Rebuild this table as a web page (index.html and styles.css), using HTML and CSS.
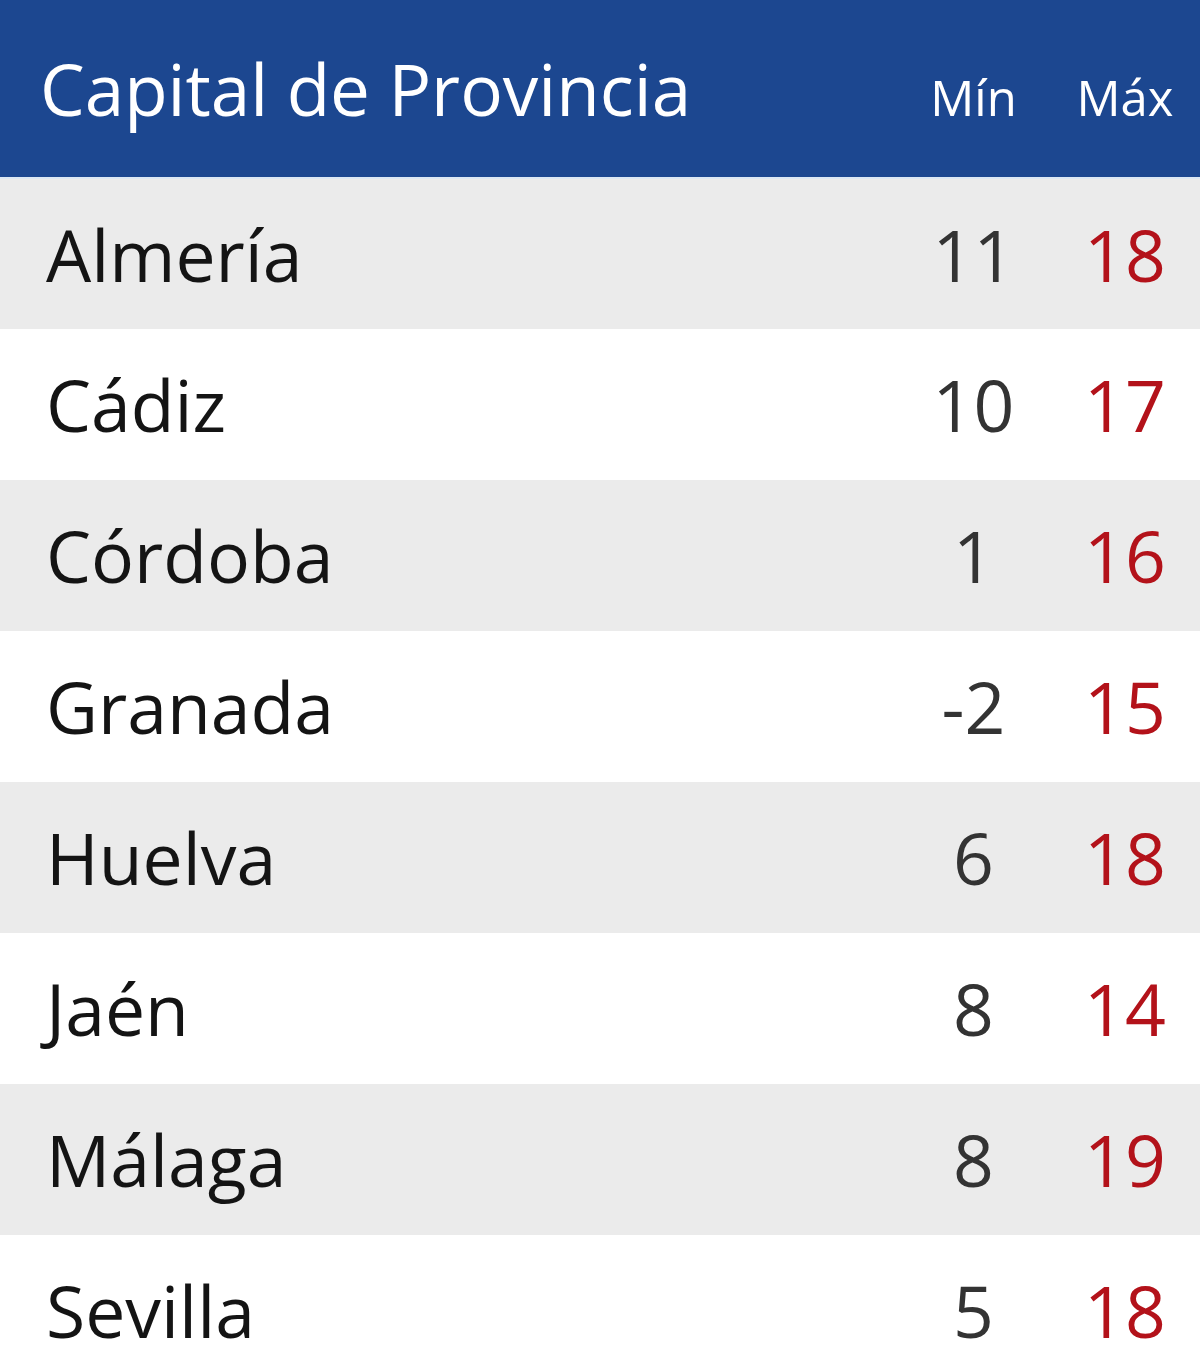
FILE: index.html
```html
<!DOCTYPE html>
<html lang="es">
<head>
<meta charset="utf-8">
<title>Temperaturas</title>
<link rel="stylesheet" href="styles.css">
</head>
<body>
<table class="temps">
  <thead>
    <tr class="head">
      <th class="name">Capital de Provincia</th>
      <th class="min">Mín</th>
      <th class="max">Máx</th>
    </tr>
  </thead>
  <tbody>
    <tr class="odd"><td class="name">Almería</td><td class="min">11</td><td class="max">18</td></tr>
    <tr><td class="name">Cádiz</td><td class="min">10</td><td class="max">17</td></tr>
    <tr class="odd"><td class="name">Córdoba</td><td class="min">1</td><td class="max">16</td></tr>
    <tr><td class="name">Granada</td><td class="min">-2</td><td class="max">15</td></tr>
    <tr class="odd"><td class="name">Huelva</td><td class="min">6</td><td class="max">18</td></tr>
    <tr><td class="name">Jaén</td><td class="min">8</td><td class="max">14</td></tr>
    <tr class="odd"><td class="name">Málaga</td><td class="min">8</td><td class="max">19</td></tr>
    <tr><td class="name">Sevilla</td><td class="min">5</td><td class="max">18</td></tr>
  </tbody>
</table>
</body>
</html>
```
FILE: styles.css
```css
html, body {
  margin: 0;
  padding: 0;
  background: #ffffff;
}
body {
  font-family: "Open Sans", "Noto Sans", "Liberation Sans", sans-serif;
}
.temps {
  width: 1200px;
  border-collapse: collapse;
  table-layout: fixed;
}
.temps th, .temps td {
  padding: 0;
  font-weight: normal;
  box-sizing: border-box;
}
.head {
  background: #1c4790;
  height: 178px;
  border-bottom: 2px solid #dce8f4;
}
.head th {
  color: #ffffff;
  vertical-align: middle;
}
.head th.name {
  text-align: left;
  padding-left: 40px;
  font-size: 71px;
}
.head th.min, .head th.max {
  font-size: 49px;
  padding-top: 16px;
}
th.name, td.name { width: 897px; }
th.min, td.min { width: 153px; text-align: center; }
th.max, td.max { width: 150px; text-align: center; }
tbody tr {
  height: 151px;
  background: #ffffff;
}
tbody tr.odd {
  background: #ebebeb;
}
tbody td {
  font-size: 71.5px;
  vertical-align: middle;
}
tbody td.name {
  color: #141414;
  padding-left: 46px;
}
tbody td.min {
  color: #333333;
}
tbody td.max {
  color: #b3121a;
}
```
